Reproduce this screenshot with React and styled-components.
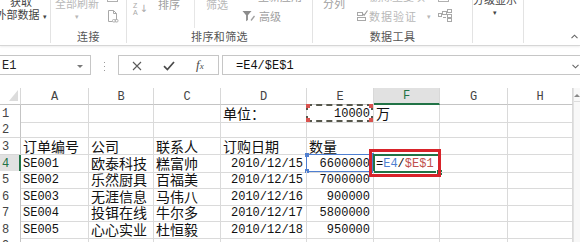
import React from 'react';
import styled, { createGlobalStyle } from 'styled-components';

const CJK = `"Noto Sans CJK SC", "Noto Sans", sans-serif`;
const MONO = `"Liberation Mono", "Noto Sans CJK SC", monospace`;

const GlobalStyle = createGlobalStyle`
  html, body { margin: 0; padding: 0; background: #ffffff; }
  body { width: 580px; height: 242px; overflow: hidden; font-family: ${CJK}; color: #222; }
  * { box-sizing: border-box; }
`;

const Page = styled.div`
  width: 580px;
  height: 242px;
  overflow: hidden;
  display: flex;
  flex-direction: column;
  background: #fff;
`;

/* ---------- Ribbon ---------- */
const Ribbon = styled.div`
  display: flex;
  height: 46px;
  flex-shrink: 0;
  border-bottom: 1px solid #d6d6d6;
  box-shadow: 0 1px 2px rgba(0, 0, 0, 0.07);
  background: #fff;
  position: relative;
  z-index: 1;
`;
const Group = styled.div`
  flex: ${p => (p.$w ? `0 0 ${p.$w}px` : '1 1 auto')};
  display: flex;
  flex-direction: column;
  height: 43px;
  border-right: ${p => (p.$sep ? '1px solid #e3e3e3' : 'none')};
`;
const GroupBody = styled.div`
  height: 31px;
  display: flex;
  align-items: flex-start;
`;
const GroupLabel = styled.div`
  height: 13px;
  line-height: 13px;
  font-size: 11px;
  letter-spacing: 0.4px;
  color: #555;
  white-space: nowrap;
  display: flex;
  align-items: center;
  justify-content: ${p => (p.$end ? 'flex-end' : 'center')};
  padding-right: ${p => (p.$end ? '2px' : '0')};
`;
const toneColor = t => (t === 'dark' ? '#444' : t === 'light' ? '#b8b8b8' : '#a0a0a0');
const BigButton = styled.div`
  display: flex;
  flex-direction: column;
  align-items: center;
  flex-shrink: 0;
  width: ${p => p.$w}px;
  margin-left: ${p => p.$ml || 0}px;
  margin-top: ${p => p.$mt || 0}px;
  font-size: ${p => p.$fs || 11}px;
  line-height: 13px;
  white-space: nowrap;
  color: ${p => toneColor(p.$tone)};
`;
const Caret = styled.span`
  font-size: 7px;
  margin-left: ${p => p.$ml ?? 3}px;
  color: inherit;
`;
const InnerSep = styled.div`
  width: 1px;
  height: 28px;
  background: #e6e6e6;
  margin-left: ${p => p.$ml}px;
  flex-shrink: 0;
`;
const Stack = styled.div`
  display: flex;
  flex-direction: column;
  gap: ${p => p.$gap ?? 6}px;
  margin-left: ${p => p.$ml || 0}px;
  margin-top: ${p => p.$mt ?? -8}px;
  flex-shrink: 0;
`;
const SmallRow = styled.div`
  display: flex;
  align-items: center;
  height: 12px;
  font-size: 11px;
  line-height: 12px;
  white-space: nowrap;
  letter-spacing: ${p => p.$ls || 0}px;
  color: ${p => toneColor(p.$tone)};
  & > svg { flex-shrink: 0; margin-right: ${p => p.$gap ?? 3}px; }
`;
const SortGlyph = styled.div`
  display: flex;
  align-items: flex-start;
  width: 15px;
  margin-left: ${p => p.$ml}px;
  margin-top: 2px;
  color: #a8a8a8;
  flex-shrink: 0;
`;
const SortLetters = styled.div`
  display: flex;
  flex-direction: column;
  font-family: "Liberation Sans", sans-serif;
  font-size: 7px;
  line-height: 7px;
  width: 6px;
`;
const SortArrow = styled.span`
  font-family: "DejaVu Sans", sans-serif;
  font-size: 10px;
  line-height: 13px;
  margin-left: 1px;
`;

/* ---------- Formula bar ---------- */
const FormulaBar = styled.div`
  display: flex;
  align-items: flex-start;
  height: 42px;
  flex-shrink: 0;
  padding-top: 9px;
  background: #fff;
`;
const NameBox = styled.div`
  width: 92px;
  height: 20px;
  margin-left: -1px;
  border: 1px solid #c6c6c6;
  display: flex;
  align-items: center;
  justify-content: space-between;
  padding: 2px 7px 0 2px;
  font-family: ${MONO};
  font-size: 12px;
  color: #222;
  flex-shrink: 0;
`;
const DropTri = styled.span`
  width: 0;
  height: 0;
  border-left: 3px solid transparent;
  border-right: 3px solid transparent;
  border-top: 3px solid #7a7a7a;
`;
const Grip = styled.div`
  width: 27px;
  height: 20px;
  display: flex;
  flex-direction: column;
  align-items: center;
  justify-content: center;
  gap: 3px;
  padding-top: 2px;
  flex-shrink: 0;
  & > i { width: 1px; height: 1px; background: #9a9a9a; display: block; }
`;
const FxBox = styled.div`
  width: 101px;
  height: 20px;
  border: 1px solid #c6c6c6;
  display: flex;
  align-items: center;
  justify-content: space-between;
  padding: 1px 10px 0 13px;
  flex-shrink: 0;
`;
const FxLabel = styled.span`
  font-family: "Liberation Serif", serif;
  font-style: italic;
  font-size: 13px;
  color: #4a4a4a;
  width: 12px;
  line-height: 14px;
  & > small { font-size: 9px; }
`;
const InputBox = styled.div`
  flex: 1 1 auto;
  height: 20px;
  margin-left: 3px;
  margin-right: -1px;
  border: 1px solid #c6c6c6;
  display: flex;
  align-items: center;
  justify-content: space-between;
  padding: 2px 1px 0 13px;
  font-family: ${MONO};
  font-size: 12px;
  color: #111;
`;

/* ---------- Sheet ---------- */
const COLS = [21, 68, 65, 67, 86, 67, 66, 68, 65];
const LETTERS = ['A', 'B', 'C', 'D', 'E', 'F', 'G', 'H'];
const ROW_H = [17, 16, 17, 16, 17, 16, 17, 16, 17];

const Sheet = styled.div`
  flex: 1 1 auto;
  display: flex;
  overflow: hidden;
`;
const GridArea = styled.div`
  width: 573px;
  display: flex;
  flex-direction: column;
  flex-shrink: 0;
`;
const Row = styled.div`
  display: grid;
  grid-template-columns: ${COLS.map(c => `${c}px`).join(' ')};
  height: ${p => p.$h}px;
  flex-shrink: 0;
`;
const ColHead = styled.div`
  border-right: 1px solid #d8d8d8;
  border-bottom: ${p => (p.$sel ? '2px solid #217346' : '1px solid #c4c4c4')};
  background: ${p => (p.$sel ? '#e1e1e1' : '#fff')};
  color: ${p => (p.$sel ? '#217346' : '#444')};
  font-family: ${MONO};
  font-size: 12px;
  display: flex;
  align-items: center;
  justify-content: center;
  padding-top: 1px;
`;
const Corner = styled.div`
  border-right: 1px solid #d8d8d8;
  border-bottom: 1px solid #c4c4c4;
  display: flex;
  align-items: flex-end;
  justify-content: flex-end;
  padding: 0 2px 3px 0;
`;
const RowHead = styled.div`
  border-right: ${p => (p.$sel ? '2px solid #217346' : '1px solid #c4c4c4')};
  border-bottom: 1px solid #d8d8d8;
  background: ${p => (p.$sel ? '#e1e1e1' : '#fff')};
  color: ${p => (p.$sel ? '#217346' : '#444')};
  font-family: ${MONO};
  font-size: 12px;
  display: flex;
  align-items: center;
  padding: 1px 0 0 2px;
`;
const Cell = styled.div`
  position: relative;
  border-right: 1px solid #dadada;
  border-bottom: 1px solid #dadada;
  display: flex;
  align-items: center;
  justify-content: ${p => (p.$right ? 'flex-end' : 'flex-start')};
  padding: ${p => (p.$cjk ? '0 3px 0 2px' : '2px 3px 0 2px')};
  font-family: ${p => (p.$cjk ? CJK : MONO)};
  font-size: ${p => (p.$cjk ? 14 : 12)}px;
  line-height: 15px;
  color: #111;
  white-space: nowrap;
`;
const Marquee = styled.div`
  position: absolute;
  top: -1px;
  left: -1px;
  right: 0;
  bottom: 0;
  border: 2px dashed #56574c;
  pointer-events: none;
`;
const RefBox = styled.div`
  position: absolute;
  top: -1px;
  left: -1px;
  right: 0;
  bottom: 0;
  border: 1px solid #4f7fd1;
  pointer-events: none;
`;
const Handle = styled.i`
  position: absolute;
  width: 4px;
  height: 4px;
  background: ${p => p.$c};
  ${p => (p.$t ? 'top: -2px;' : 'bottom: -2px;')}
  ${p => (p.$l ? 'left: -2px;' : 'right: -2px;')}
`;
const ActiveBox = styled.div`
  position: absolute;
  top: -1px;
  left: -1px;
  right: -1px;
  bottom: -1px;
  border: 2px solid #217346;
  pointer-events: none;
`;
const FillHandle = styled.i`
  position: absolute;
  right: -4px;
  bottom: -4px;
  width: 5px;
  height: 5px;
  background: #217346;
  outline: 1px solid #fff;
`;
const Annotation = styled.div`
  position: absolute;
  top: -6px;
  left: -5px;
  right: -2px;
  bottom: -5px;
  border: 3px solid #d8232a;
  pointer-events: none;
  z-index: 2;
`;
const Ref = styled.span`
  color: ${p => p.$c};
`;
const ScrollBar = styled.div`
  width: 7px;
  flex-shrink: 0;
  background: #f8f8f8;
  border-left: 1px solid #e2e2e2;
  display: flex;
  flex-direction: column;
`;
const ScrollUp = styled.div`
  height: 14px;
  border-bottom: 1px solid #dcdcdc;
  display: flex;
  align-items: center;
  justify-content: center;
  padding-top: 2px;
  & > span {
    width: 0; height: 0;
    border-left: 3px solid transparent;
    border-right: 3px solid transparent;
    border-bottom: 3px solid #888;
  }
`;

/* ---------- Icons ---------- */
const IconBox = () => (
  <svg width="11" height="12" viewBox="0 0 11 12">
    <rect x="0.5" y="0.5" width="10" height="10" fill="none" stroke="#b0b0b0" />
  </svg>
);
const IconLinks = () => (
  <svg width="12" height="13" viewBox="0 0 12 13">
    <path d="M1.5 0.5h5l3 3v6" fill="none" stroke="#a8a8a8" />
    <path d="M1.5 0.5v11h4" fill="none" stroke="#a8a8a8" />
    <path d="M6.5 0.5v3h3" fill="none" stroke="#a8a8a8" />
    <rect x="5.5" y="9.5" width="3" height="2.5" rx="1" fill="none" stroke="#b0b0b0" />
    <rect x="8" y="9.5" width="3" height="2.5" rx="1" fill="none" stroke="#b0b0b0" />
  </svg>
);
const IconReapply = () => (
  <svg width="12" height="12" viewBox="0 0 12 12">
    <path d="M9.5 6a3.5 3.5 0 1 1 -1 -2.5" fill="none" stroke="#a8a8a8" strokeWidth="1.2" />
    <path d="M9 1.5v2.5h-2.5" fill="none" stroke="#a8a8a8" strokeWidth="1.2" />
  </svg>
);
const IconFunnel = () => (
  <svg width="14" height="12" viewBox="0 0 14 12">
    <path d="M0.5 1h9l-3.6 4.2v4.8l-1.8 1.2v-6z" fill="#8c8c8c" />
    <path d="M9 10.5l3.5 -4.5" stroke="#a0a0a0" strokeWidth="1.3" />
  </svg>
);
const IconDedupe = () => (
  <svg width="11" height="12" viewBox="0 0 11 12">
    <rect x="0.5" y="0.5" width="4" height="3" fill="none" stroke="#a8a8a8" />
    <rect x="0.5" y="5.5" width="4" height="3" fill="none" stroke="#a8a8a8" />
    <path d="M6 3l4 5M10 3l-4 5" stroke="#b0b0b0" />
  </svg>
);
const IconValidate = () => (
  <svg width="11" height="12" viewBox="0 0 11 12">
    <rect x="0.5" y="2.5" width="5" height="3" fill="none" stroke="#a8a8a8" />
    <rect x="0.5" y="7.5" width="8" height="3" fill="none" stroke="#a8a8a8" />
    <path d="M5.5 3.5l1.6 1.8l3.4 -4.8" fill="none" stroke="#9a9a9a" strokeWidth="1.1" />
  </svg>
);
const IconConsolidate = () => (
  <svg width="15" height="13" viewBox="0 0 15 13">
    <rect x="0.5" y="4.5" width="3" height="3" fill="none" stroke="#a8a8a8" />
    <rect x="4.5" y="2.5" width="4" height="3" fill="none" stroke="#a8a8a8" />
    <rect x="9.5" y="0.5" width="4" height="3" fill="none" stroke="#a8a8a8" />
    <rect x="9.5" y="5.5" width="4" height="3" fill="none" stroke="#a8a8a8" />
    <rect x="9.5" y="9.5" width="4" height="3" fill="none" stroke="#a8a8a8" />
    <path d="M5 8.5h3" stroke="#a8a8a8" />
  </svg>
);
const IconX = () => (
  <svg width="10" height="10" viewBox="0 0 10 10">
    <path d="M1 1l8 8M9 1l-8 8" stroke="#5a5a5a" strokeWidth="1.1" />
  </svg>
);
const IconCheck = () => (
  <svg width="12" height="10" viewBox="0 0 12 10">
    <path d="M1 5.2l3.4 3.3l6.6 -7.5" fill="none" stroke="#4a4a4a" strokeWidth="1.7" />
  </svg>
);
const ChevronDown = () => (
  <svg width="7" height="5" viewBox="0 0 7 5">
    <path d="M0.5 0.8l3 3l3 -3" fill="none" stroke="#666" strokeWidth="1.1" />
  </svg>
);
const ChevronUp = () => (
  <svg width="7" height="5" viewBox="0 0 7 5">
    <path d="M0.5 4.2l3 -3l3 3" fill="none" stroke="#666" strokeWidth="1.1" />
  </svg>
);
const CornerTri = () => (
  <svg width="9" height="11" viewBox="0 0 9 11">
    <path d="M9 0v11h-9z" fill="#dcdcdc" />
  </svg>
);

/* ---------- Data ---------- */
const DATA = {
  1: { D: '单位：', E: '10000', F: '万' },
  3: { A: '订单编号', B: '公司', C: '联系人', D: '订购日期', E: '数量' },
  4: { A: 'SE001', B: '欧泰科技', C: '糕富帅', D: '2010/12/15', E: '6600000' },
  5: { A: 'SE002', B: '乐然厨具', C: '百福美', D: '2010/12/15', E: '7000000' },
  6: { A: 'SE003', B: '无涯信息', C: '马伟八', D: '2010/12/16', E: '900000' },
  7: { A: 'SE004', B: '投铒在线', C: '牛尔多', D: '2010/12/17', E: '5800000' },
  8: { A: 'SE005', B: '心心实业', C: '杜恒毅', D: '2010/12/18', E: '950000' },
};

const isCjk = t => /[\u3000-\u9fff\uff00-\uffef]/.test(t);
const isNum = t => /^[\d/.]+$/.test(t);

function SheetCell({ row, col }) {
  const text = (DATA[row] && DATA[row][col]) || '';
  const key = `${col}${row}`;
  if (key === 'F4') {
    return (
      <Cell>
        =<Ref $c="#4f7fd1">E4</Ref>/<Ref $c="#c0504d">$E$1</Ref>
        <ActiveBox><FillHandle /></ActiveBox>
        <Annotation />
      </Cell>
    );
  }
  return (
    <Cell $cjk={isCjk(text)} $right={isNum(text)}>
      {text}
      {key === 'E1' && (
        <Marquee>
          <Handle $c="#d9534f" $t $l />
          <Handle $c="#d9534f" $t />
          <Handle $c="#d9534f" $l />
          <Handle $c="#d9534f" />
        </Marquee>
      )}
      {key === 'E4' && (
        <RefBox>
          <Handle $c="#4f7fd1" $t $l />
          <Handle $c="#4f7fd1" $t />
          <Handle $c="#4f7fd1" $l />
          <Handle $c="#4f7fd1" />
        </RefBox>
      )}
    </Cell>
  );
}

export default function App() {
  return (
    <Page>
      <GlobalStyle />
      <Ribbon>
        <Group $w={51} $sep>
          <GroupBody>
            <BigButton $w={48} $ml={-3} $mt={-5} $tone="dark">
              <span>获取</span>
              <span>外部数据<Caret>▾</Caret></span>
            </BigButton>
          </GroupBody>
          <GroupLabel />
        </Group>
        <Group $w={76} $sep>
          <GroupBody>
            <BigButton $w={46} $ml={3} $mt={-3} $tone="light">
              <span>全部刷新</span>
              <Caret $ml={0}>▾</Caret>
            </BigButton>
            <Stack $ml={7} $mt={-9} $gap={7}>
              <IconBox />
              <IconLinks />
            </Stack>
          </GroupBody>
          <GroupLabel>连接</GroupLabel>
        </Group>
        <Group $w={186} $sep>
          <GroupBody>
            <SortGlyph $ml={6}>
              <SortLetters>
                <span>Z</span>
                <span>A</span>
              </SortLetters>
              <SortArrow>↓</SortArrow>
            </SortGlyph>
            <BigButton $w={22} $ml={10} $mt={-2}>
              <span>排序</span>
            </BigButton>
            <InnerSep $ml={14} />
            <BigButton $w={22} $ml={11} $mt={-2} $tone="light">
              <span>筛选</span>
            </BigButton>
            <Stack $ml={14} $mt={-10} $gap={8}>
              <SmallRow $gap={4}><IconReapply />重新应用</SmallRow>
              <SmallRow $gap={3}><IconFunnel />高级</SmallRow>
            </Stack>
          </GroupBody>
          <GroupLabel>排序和筛选</GroupLabel>
        </Group>
        <Group $w={160} $sep>
          <GroupBody>
            <BigButton $w={22} $ml={10} $mt={-3}>
              <span>分列</span>
            </BigButton>
            <Stack $ml={12} $mt={-10} $gap={8}>
              <SmallRow $gap={2} $tone="light"><IconDedupe />删除重复项</SmallRow>
              <SmallRow $gap={1} $ls={1} $tone="light">
                <IconValidate />数据验证<Caret $ml={10}>▾</Caret>
              </SmallRow>
            </Stack>
            <Stack $ml={6} $mt={-9} $gap={6}>
              <IconBox />
              <IconConsolidate />
            </Stack>
          </GroupBody>
          <GroupLabel>数据工具</GroupLabel>
        </Group>
        <Group $w={51} $sep>
          <GroupBody>
            <BigButton $w={44} $ml={0} $mt={-7} $tone="dark">
              <span>分级显示</span>
              <Caret $ml={0}>▾</Caret>
            </BigButton>
          </GroupBody>
          <GroupLabel />
        </Group>
        <Group>
          <GroupBody />
          <GroupLabel $end><ChevronUp /></GroupLabel>
        </Group>
      </Ribbon>

      <FormulaBar>
        <NameBox>
          <span>E1</span>
          <DropTri />
        </NameBox>
        <Grip><i /><i /><i /></Grip>
        <FxBox>
          <IconX />
          <IconCheck />
          <FxLabel>f<small>x</small></FxLabel>
        </FxBox>
        <InputBox>
          <span>=E4/$E$1</span>
          <ChevronDown />
        </InputBox>
      </FormulaBar>

      <Sheet>
        <GridArea>
          <Row $h={17}>
            <Corner><CornerTri /></Corner>
            {LETTERS.map(l => (
              <ColHead key={l} $sel={l === 'F'}>{l}</ColHead>
            ))}
          </Row>
          {ROW_H.map((h, i) => {
            const r = i + 1;
            return (
              <Row key={r} $h={h}>
                <RowHead $sel={r === 4}>{r}</RowHead>
                {LETTERS.map(l => (
                  <SheetCell key={l} row={r} col={l} />
                ))}
              </Row>
            );
          })}
        </GridArea>
        <ScrollBar>
          <ScrollUp><span /></ScrollUp>
        </ScrollBar>
      </Sheet>
    </Page>
  );
}
